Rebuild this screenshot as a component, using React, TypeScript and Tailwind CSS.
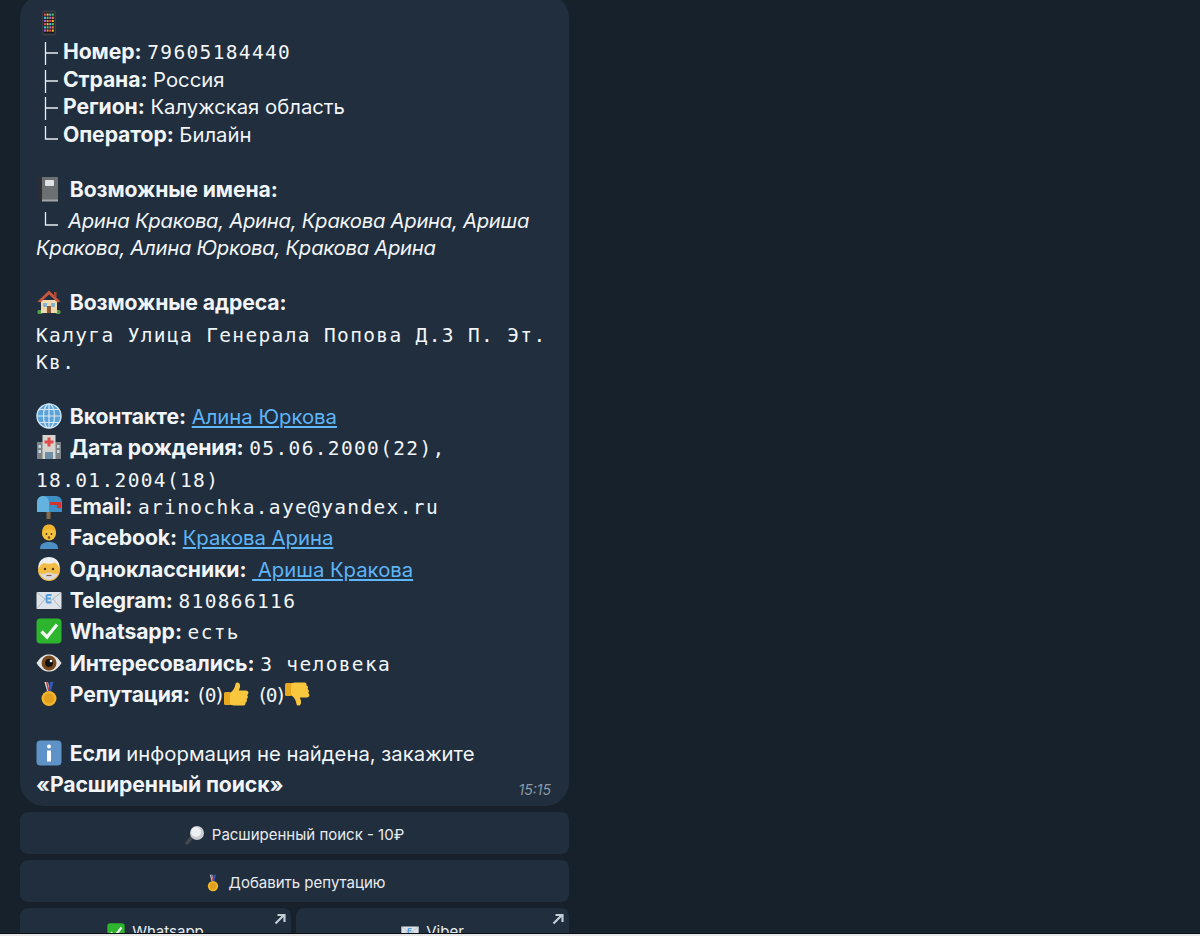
import React from "react";

const E = ({ children, w = 26 }: { children: React.ReactNode; w?: number }) => (
  <svg viewBox="0 0 26 26" width={w} height={w} className="mr-[2px] inline-block shrink-0 align-[-5px]">{children}</svg>
);

const Phone = () => (
  <E>
    <rect x="6" y="0.5" width="14" height="25" rx="2.5" fill="#3a3f46" />
    <rect x="7.5" y="2.5" width="11" height="21" fill="#15171c" />
    {[0, 1, 2, 3, 4, 5].map((r) => [0, 1, 2, 3].map((c) => (
      <rect key={r + "-" + c} x={8 + c * 2.6} y={3.5 + r * 3.2} width="2" height="2.2" fill={["#e84b5c", "#f3c33f", "#4fb8ef", "#59c86b", "#c15adf", "#f08d3c"][(r * 2 + c) % 6]} />
    )))}
  </E>
);
const Book = () => (
  <E>
    <rect x="5" y="1" width="17" height="24" rx="1" fill="#6d7073" />
    <rect x="2.5" y="0.5" width="3.5" height="25" fill="#2c2e31" />
    <rect x="9" y="4" width="9" height="6" rx="1" fill="#dfe3e6" />
    <rect x="6" y="23.5" width="16" height="2" fill="#a2a4a6" />
  </E>
);
const House = () => (
  <E>
    <rect x="1.5" y="21" width="5" height="4" rx="1.5" fill="#55a045" />
    <rect x="19.5" y="21" width="5" height="4" rx="1.5" fill="#55a045" />
    <rect x="5" y="11" width="16" height="13" fill="#f0d9ae" />
    <path d="M13 1.5 L24.5 12.5 L21.5 13.5 L13 5.5 L4.5 13.5 L1.5 12.5 Z" fill="#c8553d" />
    <rect x="18" y="3" width="2.5" height="5" fill="#a9462f" />
    <rect x="7" y="14" width="4" height="4" fill="#7fb6d8" />
    <rect x="15" y="14" width="4" height="4" fill="#7fb6d8" />
    <rect x="11" y="17" width="4" height="7" fill="#8a5a34" />
  </E>
);
const Globe = () => (
  <E>
    <circle cx="13" cy="13" r="12.5" fill="#5ba3d9" />
    <g fill="none" stroke="#d7e8f4" strokeWidth="1.2">
      <circle cx="13" cy="13" r="12" />
      <ellipse cx="13" cy="13" rx="5.5" ry="12" />
      <path d="M13 1V25M1 13H25M3 6.5H23M3 19.5H23" />
    </g>
  </E>
);
const Hospital = () => (
  <E>
    <rect x="1" y="8" width="24" height="17" fill="#7d8287" />
    <rect x="6.5" y="1" width="13" height="24" fill="#d6d4cf" />
    <path d="M11.5 3.5h3v3h3v3h-3v3h-3v-3h-3v-3h3z" fill="#e24b4b" />
    <rect x="9" y="18" width="8" height="7" fill="#6f8ea3" />
    <rect x="2.5" y="11" width="2.5" height="3" fill="#c3d5e0" />
    <rect x="2.5" y="16" width="2.5" height="3" fill="#c3d5e0" />
    <rect x="21" y="11" width="2.5" height="3" fill="#c3d5e0" />
    <rect x="21" y="16" width="2.5" height="3" fill="#c3d5e0" />
  </E>
);
const Mailbox = () => (
  <E>
    <rect x="10.5" y="18" width="4" height="8" fill="#8a6a4a" />
    <path d="M1 19V9a6 6 0 0 1 6-6h13a6 6 0 0 1 6 6v10z" fill="#3f8fc4" />
    <path d="M1 19V9a6 6 0 0 1 12 0v10z" fill="#64b2e0" />
    <rect x="14" y="9" width="11" height="3" fill="#d0342f" />
    <rect x="21" y="9" width="4" height="6" fill="#d0342f" />
  </E>
);
const Man = () => (
  <E>
    <path d="M4 25c0-5 3-7 9-7s9 2 9 7z" fill="#4c8fc4" />
    <circle cx="13" cy="9.5" r="7" fill="#f5c33b" />
    <path d="M6 9c0-6 3-8.500 7-8.500S20 3 20 9c-2-3-5-3.500-7-3.500S8 6 6 9z" fill="#f0b32d" />
    <circle cx="10.5" cy="10" r="0.9" fill="#4a3520" />
    <circle cx="15.5" cy="10" r="0.9" fill="#4a3520" />
    <ellipse cx="13" cy="13.5" rx="1.3" ry="1.5" fill="#8a5a2a" />
  </E>
);
const OldMan = () => (
  <E>
    <circle cx="13" cy="14" r="11" fill="#f3bd45" />
    <path d="M2.500 13C1.500 5 7 1 13 1s11.500 4 10.500 12c-1-4-3-6-5-6.500-3 1.500-7 1.500-11 .5C5 8 3.500 10 2.500 13z" fill="#eeeeee" />
    <path d="M4 17c2 9 16 9 18 0-1.500 1-3 1.500-5 .5-2-1-6-1-8 0-2 1-3.500.5-5-.5z" fill="#d9d9d9" />
    <circle cx="9" cy="13" r="1.200" fill="#4a3520" />
    <circle cx="17" cy="13" r="1.200" fill="#4a3520" />
    <path d="M10.500 19.500h5" stroke="#9a5a3a" strokeWidth="1.200" />
  </E>
);
const Envelope = ({ w = 26 }: { w?: number }) => (
  <E w={w}>
    <rect x="0.500" y="5" width="25" height="17" rx="1" fill="#dde3e8" />
    <path d="M1 5.500 13 15 25 5.500" fill="none" stroke="#aeb8c0" strokeWidth="1" />
    <path d="M1 21.500 9 12M25 21.500 17 12" fill="none" stroke="#aeb8c0" strokeWidth="1" />
    <path d="M10.500 8h5M10.500 8v7.500M10.500 11.500h4.500M10.500 15.500h5" stroke="#4f9ee0" strokeWidth="1.800" fill="none" />
  </E>
);
const Check = ({ w = 26 }: { w?: number }) => (
  <E w={w}>
    <rect x="0.500" y="0.500" width="25" height="25" rx="4" fill="#2db52d" />
    <path d="M5.500 13.500 11 19 21 6.500" fill="none" stroke="#f4f8f4" strokeWidth="3.200" />
  </E>
);
const Eye = () => (
  <E>
    <path d="M0.500 13C5 6 9 4.500 13 4.500S21 6 25.500 13C21 20 17 21.500 13 21.500S5 20 .5 13z" fill="#e4e4e2" />
    <circle cx="13" cy="13" r="7.500" fill="#7a4a1f" />
    <circle cx="13" cy="13" r="4" fill="#111" />
    <circle cx="15" cy="11" r="1.300" fill="#fff" />
  </E>
);
const Medal = ({ w = 26 }: { w?: number }) => (
  <E w={w}>
    <path d="M8.500 1h3.500l2 9h-3z" fill="#d8dde3" />
    <path d="M17.500 1H14l-2 9h3z" fill="#2f58b8" />
    <path d="M10 1h1.500l1.500 7-1 2z" fill="#c8332e" />
    <circle cx="13" cy="17.500" r="7.500" fill="#f2b52a" />
    <circle cx="13" cy="17.500" r="5" fill="#e19f1f" />
  </E>
);
const ThumbPaths = () => (
  <>
    <rect x="1" y="11" width="7" height="13" rx="1.500" fill="#e8a91f" />
    <path d="M7 12c3-2 5-5 5.500-9 .2-2 4-2.500 4.500 1 .3 2-.5 4-1.200 5.500H23c3 0 3 4 1 4.500 1.500 1 1 3.500-.5 4 1 1 .5 3-1 3.500.5 1.500-.5 3-2 3H11c-2 0-4-1-4-1z" fill="#f9c73e" />
  </>
);
const Up = () => <E><ThumbPaths /></E>;
const Down = () => <E><g transform="translate(0 26) scale(1 -1)"><ThumbPaths /></g></E>;
const Info = () => (
  <E>
    <rect x="0.500" y="0.500" width="25" height="25" rx="4" fill="#5f93c7" />
    <circle cx="13" cy="6.500" r="2" fill="#fff" />
    <rect x="11" y="10.500" width="4" height="11" fill="#fff" />
  </E>
);
const Magnifier = () => (
  <svg viewBox="0 0 20 20" width="20" height="20" className="mr-[2px] inline-block shrink-0">
    <path d="M2 18 8 11" stroke="#45484c" strokeWidth="3.500" strokeLinecap="round" />
    <circle cx="12" cy="8" r="7" fill="#c9ccd0" />
    <circle cx="11" cy="7" r="5" fill="#eef0f2" />
  </svg>
);

const M = ({ children }: { children: React.ReactNode }) => (
  <span className="font-['DejaVu_Sans_Mono',monospace] text-[19.5px] tracking-[1.35px]">{children}</span>
);
const Zero = () => (
  <span className="font-['DejaVu_Sans_Mono',monospace] text-[19.5px] tracking-[-2.6px]">(0)</span>
);
const B = ({ children }: { children: React.ReactNode }) => <b className="text-[21.2px] font-bold tracking-[-0.1px]">{children}</b>;
const A = ({ children }: { children: React.ReactNode }) => <span className="text-[#5eb5f7] underline underline-offset-2">{children}</span>;

const L = ({ children, tall = false, first = false }: { children?: React.ReactNode; tall?: boolean; first?: boolean }) => (
  <div className={(first ? "h-[28px]" : tall ? "h-[31.3px]" : "h-[27.5px]") + " whitespace-pre leading-[27.5px]"}>{children}</div>
);

const Tree = ({ last = false, wide = false }: { last?: boolean; wide?: boolean }) => (
  <svg viewBox="0 0 16 24" width="16" height="24" className={(wide ? "mr-[8px]" : "mr-[3px]") + " ml-[8px] inline-block align-[-6px]"}>
    <path d={last ? "M1.500 2V15H14" : "M1.500 1V24M1.500 12H14"} fill="none" stroke="#e8edf2" strokeWidth="1.300" />
  </svg>
);

const Btn = ({ children, arrow = false, cls = "" }: { children: React.ReactNode; arrow?: boolean; cls?: string }) => (
  <div className={"relative flex items-center justify-center gap-[5px] rounded-[8px] bg-[#202e3e] text-[15px] text-[#e8ecf0] " + cls}>
    {children}
    {arrow && (
      <svg viewBox="0 0 12 12" width="12" height="12" className="absolute right-[5px] top-[5px]">
        <path d="M1.500 10.500 9.500 2.500M3.500 2h7v7" fill="none" stroke="#c3cdd6" strokeWidth="2.200" />
      </svg>
    )}
  </div>
);

export default function App() {
  return (
    <div className="h-[936px] w-[1200px] overflow-hidden bg-[#17212b] font-['Inter','Noto_Sans',sans-serif] text-[20.3px] text-[#f2f5f8]">
      <div className="h-[933px] overflow-hidden pl-[20px]">
        <div className="relative -mt-[6px] h-[812px] w-[549px] rounded-[24px] bg-[#202e3e] pl-[16px] pt-[16px]">
          <L first><Phone /></L>
          <L><Tree /><B>Номер:</B> <M>79605184440</M></L>
          <L><Tree /><B>Страна:</B> Россия</L>
          <L><Tree /><B>Регион:</B> Калужская область</L>
          <L><Tree last /><B>Оператор:</B> Билайн</L>
          <L />
          <L tall><Book /> <B>Возможные имена:</B></L>
          <L><Tree last wide /><i className="tracking-[-0.28px]">Арина Кракова, Арина, Кракова Арина, Ариша</i></L>
          <L><i className="tracking-[-0.28px]">Кракова, Алина Юркова, Кракова Арина</i></L>
          <L />
          <L tall><House /> <B>Возможные адреса:</B></L>
          <L><M>Калуга Улица Генерала Попова Д.3 П. Эт.</M></L>
          <L><M>Кв.</M></L>
          <L />
          <L tall><Globe /> <B>Вконтакте:</B> <A>Алина Юркова</A></L>
          <L tall><Hospital /> <B>Дата рождения:</B> <M>05.06.2000(22),</M></L>
          <L><M>18.01.2004(18)</M></L>
          <L tall><Mailbox /> <B>Email:</B> <M>arinochka.aye@yandex.ru</M></L>
          <L tall><Man /> <B>Facebook:</B> <A>Кракова Арина</A></L>
          <L tall><OldMan /> <B>Одноклассники:</B> <A> Ариша Кракова</A></L>
          <L tall><Envelope /> <B>Telegram:</B> <M>810866116</M></L>
          <L tall><Check /> <B>Whatsapp:</B> <M>есть</M></L>
          <L tall><Eye /> <B>Интересовались:</B> <M>3 человека</M></L>
          <L tall><Medal /> <B>Репутация:</B> <Zero /><Up /> <Zero /><Down /></L>
          <L />
          <L tall><Info /> <B>Если</B> информация не найдена, закажите</L>
          <L tall><B>«Расширенный поиск»</B></L>
          <span className="absolute bottom-[6px] right-[18px] text-[14px] italic text-[#8d9aa8]">15:15</span>
        </div>
        <div className="mt-[6px] flex w-[549px] flex-col gap-[6px]">
          <Btn cls="h-[42px] pt-[4px]"><Magnifier />Расширенный поиск - 10₽</Btn>
          <Btn cls="h-[42px] pt-[4px]"><Medal w={18} />Добавить репутацию</Btn>
          <div className="flex gap-[5px]">
            <Btn arrow cls="h-[42px] w-[271px] pt-[6px]"><Check w={18} />Whatsapp</Btn>
            <Btn arrow cls="h-[42px] w-[273px] pt-[6px]"><Envelope w={18} />Viber</Btn>
          </div>
        </div>
      </div>
      <div className="h-[1px] bg-[#0c1117]" />
      <div className="h-[2px] bg-[#e9e9e9]" />
    </div>
  );
}
